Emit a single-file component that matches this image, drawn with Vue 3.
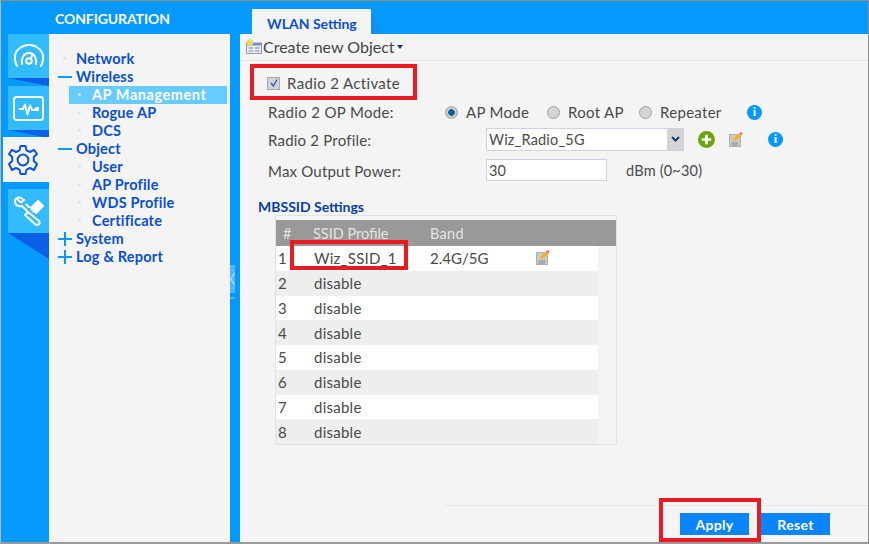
<script setup>
const tree = [
  { label: 'Network', level: 0, mark: 'dot' },
  { label: 'Wireless', level: 0, mark: 'minus' },
  { label: 'AP Management', level: 1, mark: 'dot', active: true },
  { label: 'Rogue AP', level: 1, mark: 'dot' },
  { label: 'DCS', level: 1, mark: 'dot' },
  { label: 'Object', level: 0, mark: 'minus' },
  { label: 'User', level: 1, mark: 'dot' },
  { label: 'AP Profile', level: 1, mark: 'dot' },
  { label: 'WDS Profile', level: 1, mark: 'dot' },
  { label: 'Certificate', level: 1, mark: 'dot' },
  { label: 'System', level: 0, mark: 'plus' },
  { label: 'Log & Report', level: 0, mark: 'plus' },
]
const rows = [
  { n: 1, name: 'Wiz_SSID_1', band: '2.4G/5G', edit: true },
  ...[2, 3, 4, 5, 6, 7, 8].map((n) => ({ n, name: 'disable', band: '', edit: false })),
]
</script>

<template>
  <div class="frame">
    <header class="top">
      <div class="title">CONFIGURATION</div>
      <div class="tab">WLAN Setting</div>
      <svg class="tabslant" width="10" height="26" viewBox="0 0 10 26"><path d="M0 0 L9 26 H0 Z" fill="#1a8cf0" /></svg>
    </header>
    <div class="body">
      <nav class="rail">
        <div class="tile">
          <svg width="32" height="26" viewBox="0 0 32 26" fill="none" stroke="#fff" stroke-width="2" stroke-linecap="round">
            <path d="M4 23 C0 15 2 8 7 5 C12 1 20 1 25 5 C30 8 32 15 28 23" />
            <path d="M9 21 C8 15 11 10 16 10 C21 10 24 15 23 21" />
            <circle cx="16" cy="18" r="2.8" />
            <path d="M17.5 15.5 L20 11" />
            <path d="M16 3 V5 M8 6.5 L9.5 8 M24 6.5 L22.5 8" stroke-width="1.4" stroke="#33bbff" />
          </svg>
        </div>
        <div class="shade small"></div>
        <div class="tile">
          <svg width="31" height="25" viewBox="0 0 31 25" fill="none" stroke="#fff" stroke-width="1.9" stroke-linejoin="round">
            <rect x="1" y="1" width="29" height="23" rx="2.5" />
            <path d="M6 13 H10 L12 8.5 L14.5 18.5 L17 9.5 L19 14 H22" />
            <circle cx="24" cy="13" r="1.4" fill="#fff" />
          </svg>
        </div>
        <div class="shade small"></div>
        <div class="tile current">
          <svg width="32" height="32" viewBox="0 0 32 32" fill="none" stroke="#0a55d8" stroke-width="2" stroke-linejoin="round">
            <path d="M13.5 2 H18.5 L19.5 6.4 L23 8 L27 5.8 L30 10 L26.8 13 V17 L30 20 L27 26 L23 24 L19.5 25.6 L18.5 30 H13.5 L12.5 25.6 L9 24 L5 26 L2 20 L5.2 17 V13 L2 10 L5 5.8 L9 8 L12.5 6.4 Z" />
            <circle cx="16" cy="16" r="5.4" />
          </svg>
        </div>
        <div class="gap"></div>
        <div class="tile">
          <svg width="30" height="30" viewBox="0 0 30 30" fill="none" stroke="#fff" stroke-width="2" stroke-linecap="round" stroke-linejoin="round">
            <path d="M3 3 L7 6.5 L10 4 L6 1.5 C2 1 0 4 1.5 7.5 C3 10 6 10.5 8 10 L15 17" />
            <path d="M12 8.5 L15 11" />
            <path d="M17 12 L24 5 L29 10 L22 17 L19 15 Z" fill="#fff" />
            <path d="M11 19 L14 16 L25 25 C27 28 23 30 21 28 Z" />
          </svg>
        </div>
        <div class="shade large"></div>
      </nav>

      <aside class="menu">
        <div v-for="item in tree" :key="item.label" class="item" :class="['lv' + item.level, { active: item.active }]">
          <span class="mark" :class="item.mark"></span>
          <span class="label">{{ item.label }}</span>
        </div>
      </aside>

      <div class="divider">
        <span class="grip">
          <svg width="5" height="14" viewBox="0 0 5 14" fill="none" stroke="#a9dcff" stroke-width="1.4"><path d="M4.5 1 L0.8 7 L4.5 13" /></svg>
        </span>
        <span class="gripline"></span>
      </div>

      <main class="content">
        <div class="toolbar">
          <svg width="16" height="15" viewBox="0 0 16 15">
            <rect x="0.5" y="4" width="15" height="10.5" fill="#e7edf5" stroke="#8b9cb3" />
            <rect x="0.5" y="4" width="15" height="2.5" fill="#6f92c4" />
            <path d="M2.5 9 H7 M2.5 12 H7 M9 9 H13.5 M9 12 H13.5" stroke="#7a8ba3" />
            <circle cx="4" cy="3.5" r="3.3" fill="#f4d65a" />
          </svg>
          <span class="create">Create new Object</span>
          <span class="caret"></span>
        </div>

        <div class="form">
          <div class="activate">
            <span class="check">
              <svg width="10" height="10" viewBox="0 0 10 10" fill="none" stroke="#4a5aa8" stroke-width="1.5"><path d="M2 5 L4.4 8 L8 1.5" /></svg>
            </span>
            <span>Radio 2 Activate</span>
          </div>

          <div class="row opmode">
            <span class="lab">Radio 2 OP Mode:</span>
            <span class="radios">
              <span class="opt"><span class="radio on"></span><span>AP Mode</span></span>
              <span class="opt"><span class="radio"></span><span>Root AP</span></span>
              <span class="opt"><span class="radio"></span><span>Repeater</span></span>
              <span class="info">i</span>
            </span>
          </div>

          <div class="row profile">
            <span class="lab">Radio 2 Profile:</span>
            <span class="select">
              <span class="sval">Wiz_Radio_5G</span>
              <span class="sbtn">
                <svg width="9" height="6" viewBox="0 0 9 6" fill="none" stroke="#1d3a78" stroke-width="2"><path d="M1 1 L4.5 4.5 L8 1" /></svg>
              </span>
            </span>
            <svg class="add" width="17" height="17" viewBox="0 0 17 17">
              <circle cx="8.5" cy="8.5" r="8.5" fill="#6aa510" />
              <path d="M8.5 3.8 V13.2 M3.8 8.5 H13.2" stroke="#fff" stroke-width="2.6" />
            </svg>
            <svg class="edit" width="14" height="15" viewBox="0 0 14 15">
              <rect x="0.5" y="2.5" width="11" height="12" fill="#c9c9c9" stroke="#b0b0b0" />
              <path d="M2.5 11 H9 M2.5 13 H9" stroke="#888" />
              <path d="M4 9 L4.6 6.4 L10.5 1 L12.8 3 L6.8 8.6 Z" fill="#f4b21c" />
              <path d="M10.5 1 L12 0 L13.6 1.8 L12.8 3 Z" fill="#e4506a" />
            </svg>
            <span class="info second">i</span>
          </div>

          <div class="row power">
            <span class="lab">Max Output Power:</span>
            <span class="input">30</span>
            <span class="unit">dBm (0~30)</span>
          </div>
        </div>

        <h3 class="section">MBSSID Settings</h3>

        <div class="table">
          <div class="thead">
            <span class="c1">#</span>
            <span class="c2">SSID Profile</span>
            <span class="c3">Band</span>
          </div>
          <div v-for="r in rows" :key="r.n" class="trow">
            <span class="c1 num">{{ r.n }}</span>
            <span class="c2 nm">{{ r.name }}</span>
            <span class="c3 bd">{{ r.band }}</span>
            <svg v-if="r.edit" class="edit2" width="14" height="15" viewBox="0 0 14 15">
              <rect x="0.5" y="2.5" width="11" height="12" fill="#c9c9c9" stroke="#b0b0b0" />
              <path d="M2.5 11 H9 M2.5 13 H9" stroke="#888" />
              <path d="M4 9 L4.6 6.4 L10.5 1 L12.8 3 L6.8 8.6 Z" fill="#f4b21c" />
              <path d="M10.5 1 L12 0 L13.6 1.8 L12.8 3 Z" fill="#e4506a" />
            </svg>
          </div>
        </div>

        <div class="spring"></div>

        <div class="footer">
          <button class="btn">Apply</button>
          <button class="btn">Reset</button>
        </div>
      </main>
    </div>

    <div class="redbox r1"></div>
    <div class="redbox r2"></div>
    <div class="redbox r3"></div>
  </div>
</template>

<style>
html, body { margin: 0; padding: 0; background: #fff; }
</style>

<style scoped>
.frame {
  position: relative;
  width: 869px;
  height: 544px;
  box-sizing: border-box;
  overflow: hidden;
  border-top: 1px solid #8c8c8c;
  border-left: 1px solid #b5b5b5;
  border-right: 1px solid #8c8c8c;
  border-bottom: 2px solid #9a9a9a;
  background: #0399fd;
  font-family: Lato, "Open Sans", sans-serif;
  color: #4a4a4a;
  display: flex;
  flex-direction: column;
}
.top {
  height: 33px;
  flex: none;
  display: flex;
  align-items: flex-end;
}
.title {
  width: 251px;
  box-sizing: border-box;
  padding-left: 54px;
  align-self: center;
  margin-top: 2px;
  color: #fff;
  font-size: 14px;
  font-weight: 700;
  letter-spacing: -0.1px;
}
.tab {
  width: 119px;
  height: 25px;
  box-sizing: border-box;
  background: #f4f4f4;
  color: #0a4fd6;
  font-size: 14px;
  font-weight: 700;
  padding: 6px 0 0 15px;
}
.tabslant { display: block; }
.body {
  flex: 1;
  display: flex;
  min-height: 0;
}
.rail {
  width: 48px;
  flex: none;
  display: flex;
  flex-direction: column;
  align-items: flex-end;
}
.tile {
  width: 41px;
  height: 44px;
  background: #33bbff;
  display: flex;
  align-items: center;
  justify-content: center;
  flex: none;
}
.tile.current {
  width: 46px;
  height: 45px;
  background: #f4f4f4;
  margin-top: -1px;
  justify-content: flex-start;
  padding-left: 4px;
  box-sizing: border-box;
}
.shade {
  width: 41px;
  background: linear-gradient(to top right, #0399fd 49.5%, #0a60e6 50.5%);
  flex: none;
}
.shade.small { height: 8px; }
.shade.large { height: 26px; }
.gap { height: 7px; flex: none; }
.menu {
  width: 181px;
  flex: none;
  box-sizing: border-box;
  background: #f4f4f4;
  padding-top: 15.5px;
  display: flex;
  flex-direction: column;
}
.item {
  height: 18px;
  display: flex;
  align-items: center;
  color: #0a4fd6;
  font-size: 14.5px;
  font-weight: 700;
  letter-spacing: 0.2px;
  position: relative;
}
.item.lv0 { padding-left: 9px; }
.item.lv1 { margin-left: 20px; margin-right: 3px; padding-left: 4px; }
.item.active {
  background: #66ccff;
  color: #fff;
  letter-spacing: 0.55px;
}
.mark {
  width: 14px;
  height: 14px;
  margin-right: 4px;
  flex: none;
  position: relative;
  display: block;
}
.item.lv1 .mark { margin-right: 5px; width: 14px; }
.mark.dot::before {
  content: "";
  position: absolute;
  left: 5px;
  top: 5px;
  width: 3px;
  height: 3px;
  background: #cfe6f7;
  border-radius: 50%;
}
.mark.minus::before,
.mark.plus::before {
  content: "";
  position: absolute;
  left: 0;
  top: 6px;
  width: 14px;
  height: 2px;
  background: #0399fd;
}
.mark.plus::after {
  content: "";
  position: absolute;
  left: 6px;
  top: 0;
  width: 2px;
  height: 14px;
  background: #0399fd;
}
.divider {
  width: 10px;
  flex: none;
  background: #0399fd;
  position: relative;
}
.grip {
  position: absolute;
  left: 0;
  top: 231px;
  width: 5px;
  height: 28px;
  background: #4db8ff;
  display: flex;
  align-items: center;
}
.gripline {
  position: absolute;
  left: 0;
  top: 263px;
  width: 5px;
  height: 2px;
  background: #4db8ff;
}
.content {
  flex: 1;
  background: #f4f4f4;
  min-width: 0;
  display: flex;
  flex-direction: column;
}
.toolbar {
  height: 27px;
  flex: none;
  box-sizing: border-box;
  padding: 0 0 1px 6px;
  display: flex;
  align-items: center;
  gap: 1px;
  border-bottom: 1px solid #e6e6e6;
  font-size: 16px;
  color: #444;
}
.caret {
  width: 0;
  height: 0;
  border: 3px solid transparent;
  border-top: 4px solid #1d3a78;
  margin-top: 4px;
  margin-left: 1px;
}
.form {
  padding-left: 28px;
  font-size: 15px;
  letter-spacing: 0.2px;
}
.activate {
  display: flex;
  align-items: center;
  height: 20px;
  margin: 12px 0 0 -1px;
  gap: 7px;
  letter-spacing: 0.35px;
}
.check {
  width: 13px;
  height: 13px;
  box-sizing: border-box;
  background: #cfd3dc;
  border: 1px solid #a9a9a9;
  display: flex;
  align-items: center;
  justify-content: center;
}
.row {
  display: flex;
  align-items: center;
  position: relative;
}
.lab { width: 218px; flex: none; padding-top: 1px; }
.opmode { height: 20px; margin-top: 9px; }
.opmode .lab { width: 177px; letter-spacing: 0.35px; padding-top: 0; }
.radios {
  display: grid;
  grid-template-columns: 102px 92px 108px 15px;
  align-items: center;
  letter-spacing: 0.3px;
}
.opt { display: flex; align-items: center; gap: 8px; }
.radio {
  width: 13px;
  height: 13px;
  box-sizing: border-box;
  border-radius: 50%;
  background: #d4d4d4;
  border: 1px solid #a0a0a0;
  display: block;
  flex: none;
}
.radio.on { background: radial-gradient(circle, #0b5f9a 0 3px, #c6ccd2 3.5px); }
.info {
  width: 15px;
  height: 15px;
  border-radius: 50%;
  background: #0399fd;
  color: #fff;
  font: 700 12px/15px "Liberation Serif", serif;
  text-align: center;
  flex: none;
}
.profile { height: 24px; margin-top: 5px; }
.select {
  width: 198px;
  height: 23px;
  box-sizing: border-box;
  background: #fff;
  border: 1px solid #cdd3e0;
  display: flex;
  align-items: center;
  justify-content: space-between;
  padding-left: 2px;
  font-size: 14.5px;
  flex: none;
}
.sbtn {
  width: 16px;
  height: 21px;
  background: #d4d4d4;
  display: flex;
  align-items: center;
  justify-content: center;
}
.add { margin-left: 14px; flex: none; }
.edit { margin-left: 14px; flex: none; }
.info.second { margin-left: 25px; }
.power { height: 22px; margin-top: 8px; }
.input {
  width: 121px;
  height: 22px;
  line-height: 21px;
  box-sizing: border-box;
  background: #fff;
  border: 1px solid #cdd3e0;
  padding-left: 2px;
  font-size: 14.5px;
  flex: none;
}
.unit { margin-left: 19px; font-size: 14.5px; }
.section {
  margin: 17px 0 0 18px;
  height: 17px;
  line-height: 17px;
  font-size: 14px;
  font-weight: 700;
  color: #0a3da8;
}
.table {
  margin: 0 0 0 35px;
  width: 342px;
  height: 230px;
  box-sizing: border-box;
  border: 1px solid #e2e2e2;
  padding-top: 4px;
  flex: none;
}
.thead {
  height: 26px;
  background: #999;
  color: #e4e4e4;
  font-size: 14.5px;
  display: flex;
  align-items: center;
}
.c1 { width: 24px; padding-left: 7px; box-sizing: border-box; flex: none; }
.c2 { width: 130px; flex: none; box-sizing: border-box; padding-left: 13px; }
.c3 { flex: none; letter-spacing: 0.3px; }
.trow {
  height: 24.75px;
  width: 322px;
  background: #eee;
  display: flex;
  align-items: center;
  font-size: 15px;
  position: relative;
}
.trow:nth-child(even) { background: #fff; }
.trow .num { padding-left: 2px; }
.trow .nm { padding-left: 14px; letter-spacing: 0.25px; }
.trow .bd { letter-spacing: 0; }
.edit2 { position: absolute; left: 260px; top: 4px; }
.spring { flex: 1; }
.footer {
  margin-left: 205px;
  height: 37px;
  flex: none;
  box-sizing: border-box;
  border-top: 1px solid #e6e6e6;
  display: flex;
  justify-content: flex-end;
  gap: 12px;
  padding: 7px 38px 0 0;
}
.btn {
  width: 69px;
  height: 22px;
  padding: 0;
  border: 0;
  background: #0a84ff;
  color: #fff;
  font: 700 14px Lato, sans-serif;
  letter-spacing: 0.3px;
}
.redbox {
  position: absolute;
  box-sizing: border-box;
  border: 4px solid #e81b23;
  pointer-events: none;
}
.r1 { left: 249px; top: 63px; width: 167px; height: 36px; }
.r2 { left: 289px; top: 239px; width: 118px; height: 30px; }
.r3 { left: 658px; top: 497px; width: 102px; height: 44px; }
</style>
